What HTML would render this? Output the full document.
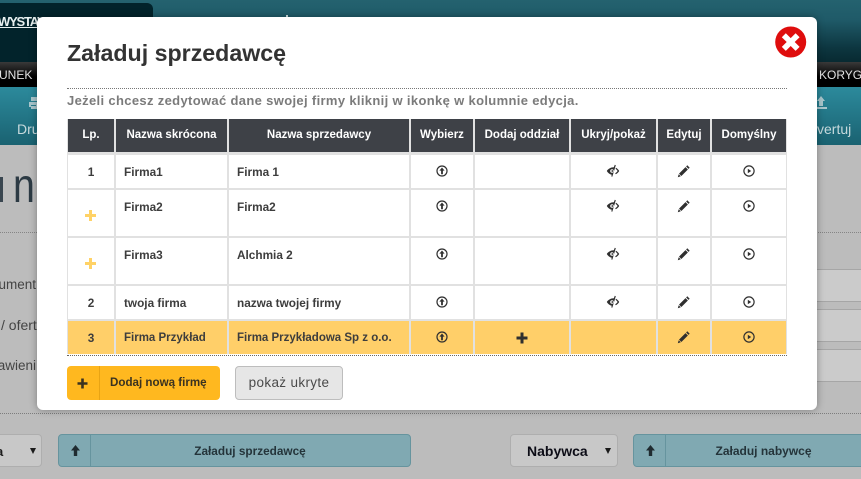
<!DOCTYPE html>
<html lang="pl">
<head>
<meta charset="utf-8">
<title>Załaduj sprzedawcę</title>
<style>
html,body{margin:0;padding:0}
body{width:861px;height:479px;overflow:hidden;position:relative;background:#bcbcbc;font-family:"Liberation Sans",sans-serif;color:#3a3a3a}
.a{position:absolute}
.t{position:absolute;white-space:nowrap}
.grid{position:absolute;left:67px;top:119px;width:718px;padding:0 1px;display:grid;background:#e1e1e1;
grid-template-columns:46px 111px 180px 62px 94px 85px 52px 74px;
grid-template-rows:34px 33px 46px 46px 33px 33px;gap:2px}
.grid>div{background:#fff;font-size:11.8px;font-weight:bold;color:#3d3d3d;position:relative;box-sizing:border-box;white-space:nowrap}
.grid>.h{background:#3e4147;color:#fff;text-align:center;line-height:33px;height:33px;font-size:11.5px}
.grid>.y{background:#ffcf69}
.l{padding:9px 0 0 8px;line-height:16px}
.c{text-align:center;padding-top:9px;line-height:16px}
.grid svg{position:absolute;left:50%;top:9px;margin-left:-7.500px;width:14px;height:14px;overflow:visible}
.plus{position:absolute;left:17px;top:20px;width:11px;height:11px}
.plus:before{content:"";position:absolute;left:4px;top:0;width:3px;height:11px;background:#ffd266}
.plus:after{content:"";position:absolute;left:0;top:4px;width:11px;height:3px;background:#ffd266}
.tri{position:absolute;width:0;height:0;border-left:3px solid transparent;border-right:3px solid transparent;border-top:6px solid #1a1a1a}
</style>
</head>
<body>
<svg width="0" height="0" style="position:absolute">
<symbol id="up" viewBox="0 0 14 14"><circle cx="7" cy="7" r="5" fill="none" stroke="#2f2f2f" stroke-width="1.2"/><path d="M7 3.500 9.600 6.600H7.900V10.300H6.100V6.600H4.400Z" fill="#2f2f2f"/></symbol>
<symbol id="eye" viewBox="0 0 14 14"><path d="M8.800 .8 9.800 1.200 6.300 12.800 5.300 12.400 5.700 10.800C3.600 10.200 1.800 8.800 .8 7 2.200 4.800 4.600 3.400 7.800 3.300Z" fill="#2f2f2f"/><circle cx="6" cy="7" r="1.800" fill="#fff"/><circle cx="6.300" cy="7" r=".9" fill="#2f2f2f"/><path d="M10 3.800C11.300 4.600 12.500 5.800 13.200 7 12.400 8.400 11.200 9.500 9.800 10.200L9.200 9.200C10.200 8.700 11 7.900 11.600 7 11.100 6.200 10.300 5.400 9.500 4.800Z" fill="#2f2f2f"/></symbol>
<symbol id="pen" viewBox="0 0 14 14"><path d="M10.300 1.300 12.700 3.700 11.500 4.900 9.100 2.500ZM8.500 3.100 10.900 5.500 4.400 12 2 9.600Z" fill="#2f2f2f"/><path d="M1.700 10.200 3.800 12.300 .8 13.200Z" fill="#2f2f2f"/></symbol>
<symbol id="play" viewBox="0 0 14 14"><circle cx="7" cy="7" r="5.100" fill="none" stroke="#2f2f2f" stroke-width="1.200"/><path d="M5.800 4.800 9.200 7 5.800 9.200Z" fill="#2f2f2f"/></symbol>
</svg>

<!-- background page -->
<div class="a" style="left:0;top:0;width:861px;height:62px;background:linear-gradient(#24626f 0,#1f5a68 20px,#0d3640 48px,#082a32 62px)"></div>
<div class="a" style="left:0;top:3px;width:153px;height:59px;background:#02232b;border-radius:0 6px 0 0"></div>
<div class="a" style="left:286px;top:15px;width:2px;height:2px;background:#cfe0e2"></div>
<div class="t" style="left:-2px;top:14px;font-size:13px;line-height:16px;font-weight:bold;letter-spacing:-1.200px;color:#e8f0f0;text-decoration:underline">WYSTAW</div>
<div class="a" style="left:0;top:62px;width:861px;height:25px;background:linear-gradient(#3a3a3a,#000 60%,#000)"></div>
<div class="t" style="left:-1px;top:68px;font-size:12px;line-height:14px;color:#e0e0e0">UNEK</div>
<div class="t" style="left:819px;top:68px;font-size:12px;line-height:14px;color:#e0e0e0">KORYGUJ</div>
<div class="a" style="left:0;top:87px;width:861px;height:58px;background:linear-gradient(#2c8a9c,#1a6271)"></div>
<svg class="a" style="left:28px;top:96px" width="10" height="14" viewBox="0 0 10 14"><path d="M3 1H10V5H3ZM1 6H10V11H8V9H3V11H1ZM3 10H10V13H3Z" fill="#a9c6cc"/></svg>
<div class="t" style="left:17px;top:121px;font-size:14px;line-height:16px;color:#c6d9dc">Druk</div>
<svg class="a" style="left:814px;top:95px" width="14" height="16" viewBox="0 0 14 16"><path d="M7 1 11 6H9V11H5V6H3ZM1 12H13V14H1Z" fill="#a9c6cc"/></svg>
<div class="t" style="left:817px;top:121px;font-size:14px;line-height:16px;color:#c6d9dc">vertuj</div>

<div class="a" style="left:0;top:177px;width:3px;height:25px;background:#3a4650"></div>
<div class="t" style="left:13px;top:162px;font-size:48px;line-height:50px;color:#2c3a44;transform:scaleX(.82);transform-origin:0 0">n</div>
<div class="a" style="left:0;top:232px;width:861px;border-top:1px dotted #858585"></div>
<div class="t" style="right:825px;top:277px;font-size:13.500px;line-height:16px;color:#444">kument</div>
<div class="t" style="left:1px;top:317px;font-size:14px;line-height:16px;color:#444">/ ofert</div>
<div class="t" style="right:825px;top:358px;font-size:13.500px;line-height:16px;color:#444">tawieni</div>
<div class="a" style="left:800px;top:269px;width:61px;height:33px;box-sizing:border-box;background:#cbcbcb;border-top:1px solid #a6a6a6;border-bottom:1px solid #a6a6a6"></div>
<div class="a" style="left:800px;top:309px;width:61px;height:33px;box-sizing:border-box;background:#cbcbcb;border-top:1px solid #a6a6a6;border-bottom:1px solid #a6a6a6"></div>
<div class="a" style="left:800px;top:349px;width:61px;height:33px;box-sizing:border-box;background:#cbcbcb;border-top:1px solid #a6a6a6;border-bottom:1px solid #a6a6a6"></div>
<div class="a" style="left:0;top:413px;width:861px;border-top:1px dotted #7d7d7d"></div>

<!-- bottom controls -->
<div class="a" style="left:-30px;top:434px;width:72px;height:33px;box-sizing:border-box;background:#c8c8c8;border:1px solid #aeaeae;border-radius:4px"></div>
<div class="t" style="left:-4px;top:444px;font-size:13px;line-height:16px;font-weight:bold;color:#1d1d1d">a</div>
<div class="tri" style="left:30px;top:448px"></div>
<div class="a" style="left:58px;top:434px;width:353px;height:33px;box-sizing:border-box;background:#80a9b2;border:1px solid #66949e;border-radius:4px"></div>
<div class="a" style="left:90px;top:435px;width:1px;height:31px;background:#66949e"></div>
<div class="t" style="left:91px;top:443px;width:318px;text-align:center;font-size:11.800px;line-height:16px;font-weight:bold;color:#24343a">Załaduj sprzedawcę</div>
<svg class="a" style="left:70px;top:444px" width="11" height="13" viewBox="0 0 11 13"><path d="M5.500 1 10 6.500H7.200V12H3.800V6.500H1Z" fill="#1f2b30"/></svg>
<div class="a" style="left:510px;top:434px;width:108px;height:33px;box-sizing:border-box;background:#c8c8c8;border:1px solid #aeaeae;border-radius:4px"></div>
<div class="t" style="left:527px;top:443px;font-size:14px;line-height:17px;font-weight:bold;color:#0c0c16">Nabywca</div>
<div class="tri" style="left:605px;top:448px"></div>
<div class="a" style="left:633px;top:434px;width:240px;height:33px;box-sizing:border-box;background:#80a9b2;border:1px solid #66949e;border-radius:4px"></div>
<div class="a" style="left:665px;top:435px;width:1px;height:31px;background:#66949e"></div>
<div class="t" style="left:666px;top:443px;width:195px;text-align:center;font-size:12px;line-height:16px;font-weight:bold;color:#24343a">Załaduj nabywcę</div>
<svg class="a" style="left:645px;top:444px" width="11" height="13" viewBox="0 0 11 13"><path d="M5.500 1 10 6.500H7.200V12H3.800V6.500H1Z" fill="#1f2b30"/></svg>

<!-- modal -->
<div class="a" style="left:37px;top:17px;width:780px;height:393px;background:#fff;border-radius:6px;box-shadow:0 0 8px rgba(0,0,0,.34)"></div>
<div class="t" style="left:67px;top:39px;font-size:23.200px;line-height:28px;font-weight:bold;color:#333">Załaduj sprzedawcę</div>
<svg class="a" style="left:775px;top:26px" width="32" height="32" viewBox="0 0 32 32"><circle cx="15.700" cy="16" r="15.500" fill="#df0d0d"/><path d="M10.800 7.200 15.700 12.100 20.600 7.200 24.600 11.200 19.700 16 24.600 20.900 20.600 24.900 15.700 20 10.800 24.900 6.800 20.900 11.700 16 6.800 11.200Z" fill="#fff"/></svg>
<div class="a" style="left:67px;top:88px;width:720px;border-top:1px dotted #777"></div>
<div class="t" style="left:67px;top:93px;font-size:13px;line-height:16px;font-weight:bold;color:#7b7b7b;letter-spacing:.34px">Jeżeli chcesz zedytować dane swojej firmy kliknij w ikonkę w kolumnie edycja.</div>

<div class="grid">
<div class="h">Lp.</div><div class="h">Nazwa skrócona</div><div class="h">Nazwa sprzedawcy</div><div class="h">Wybierz</div><div class="h">Dodaj oddział</div><div class="h">Ukryj/pokaż</div><div class="h">Edytuj</div><div class="h">Domyślny</div>

<div class="c">1</div><div class="l">Firma1</div><div class="l">Firma 1</div>
<div><svg><use href="#up"/></svg></div><div></div><div><svg><use href="#eye"/></svg></div><div><svg><use href="#pen"/></svg></div><div><svg><use href="#play"/></svg></div>

<div><span class="plus"></span></div><div class="l">Firma2</div><div class="l">Firma2</div>
<div><svg><use href="#up"/></svg></div><div></div><div><svg><use href="#eye"/></svg></div><div><svg><use href="#pen"/></svg></div><div><svg><use href="#play"/></svg></div>

<div><span class="plus"></span></div><div class="l">Firma3</div><div class="l">Alchmia 2</div>
<div><svg><use href="#up"/></svg></div><div></div><div><svg><use href="#eye"/></svg></div><div><svg><use href="#pen"/></svg></div><div><svg><use href="#play"/></svg></div>

<div class="c">2</div><div class="l">twoja firma</div><div class="l">nazwa twojej firmy</div>
<div><svg><use href="#up"/></svg></div><div></div><div><svg><use href="#eye"/></svg></div><div><svg><use href="#pen"/></svg></div><div><svg><use href="#play"/></svg></div>

<div class="c y">3</div><div class="l y" style="font-size:11.500px">Firma Przykład</div><div class="l y" style="font-size:11.500px">Firma Przykładowa Sp z o.o.</div>
<div class="y"><svg><use href="#up"/></svg></div>
<div class="y"><svg style="margin-left:-6px;top:11px;width:12px;height:12px" viewBox="0 0 12 12"><path d="M4.500 .5H7.500V4.500H11.500V7.500H7.500V11.500H4.500V7.500H.5V4.500H4.500Z" fill="#2f2f2f"/></svg></div>
<div class="y"></div><div class="y"><svg><use href="#pen"/></svg></div><div class="y"><svg><use href="#play"/></svg></div>
</div>
<div class="a" style="left:67px;top:355px;width:720px;border-top:1px dotted #666"></div>

<div class="a" style="left:67px;top:366px;width:153px;height:34px;background:#ffb81f;border-radius:4px"></div>
<div class="a" style="left:99px;top:366px;width:1px;height:34px;background:#e8a414"></div>
<svg class="a" style="left:77px;top:378px" width="11" height="11" viewBox="0 0 11 11"><path d="M4.200 .5H6.800V4.200H10.500V6.800H6.800V10.500H4.200V6.800H.5V4.200H4.200Z" fill="#3a3220"/></svg>
<div class="t" style="left:110px;top:375px;font-size:11.600px;line-height:16px;font-weight:bold;color:#3a3220">Dodaj nową firmę</div>
<div class="a" style="left:235px;top:366px;width:108px;height:34px;box-sizing:border-box;background:#e6e6e6;border:1px solid #bdbdbd;border-radius:4px"></div>
<div class="t" style="left:235px;top:375px;width:108px;text-align:center;font-size:13.500px;line-height:16px;color:#4a4a4a;letter-spacing:.35px">pokaż ukryte</div>
</body>
</html>
